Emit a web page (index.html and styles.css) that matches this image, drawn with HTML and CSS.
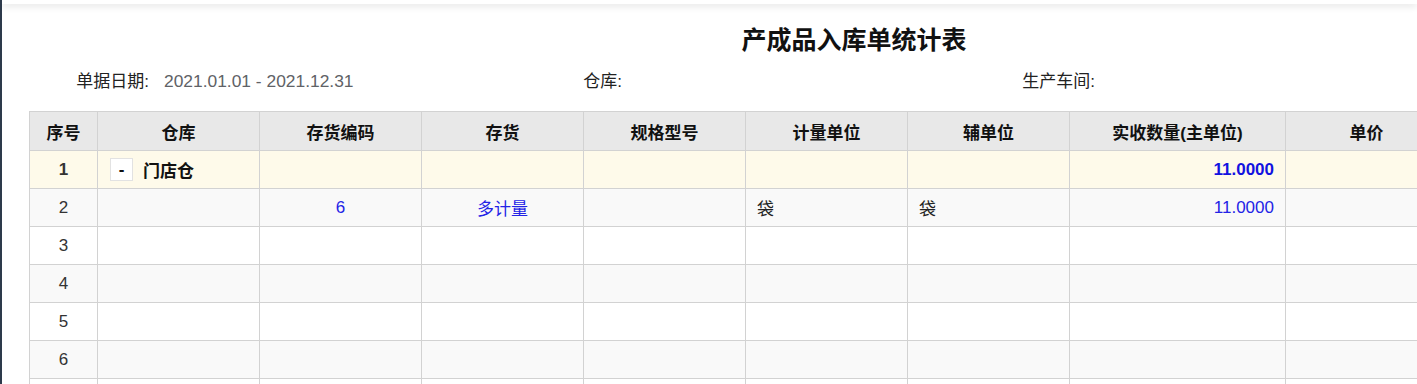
FILE: index.html
```html
<!DOCTYPE html>
<html lang="zh-CN">
<head>
<meta charset="utf-8">
<title>产成品入库单统计表</title>
<link rel="stylesheet" href="styles.css">
</head>
<body>
<div class="app">
  <aside class="side"></aside>
  <main class="main">
    <div class="topbar"></div>
    <div class="content">
      <h1 class="title">产成品入库单统计表</h1>
      <div class="info">
        <div class="field"><span class="label">单据日期:</span><span class="value">2021.01.01 - 2021.12.31</span></div>
        <div class="field"><span class="label">仓库:</span><span class="value"></span></div>
        <div class="field"><span class="label">生产车间:</span><span class="value"></span></div>
      </div>
      <table class="grid">
        <colgroup>
          <col class="c-seq"><col class="c-std"><col class="c-std"><col class="c-std"><col class="c-std"><col class="c-std"><col class="c-std"><col class="c-qty"><col class="c-std">
        </colgroup>
        <thead>
          <tr><th>序号</th><th>仓库</th><th>存货编码</th><th>存货</th><th>规格型号</th><th>计量单位</th><th>辅单位</th><th>实收数量(主单位)</th><th>单价</th></tr>
        </thead>
        <tbody>
          <tr class="group">
            <td class="center">1</td>
            <td><span class="toggle">-</span><span class="gname">门店仓</span></td>
            <td></td><td></td><td></td><td></td><td></td>
            <td class="num link">11.0000</td><td></td>
          </tr>
          <tr class="odd">
            <td class="center">2</td><td></td>
            <td class="center link">6</td><td class="center link">多计量</td>
            <td></td><td>袋</td><td>袋</td>
            <td class="num link">11.0000</td><td></td>
          </tr>
          <tr><td class="center">3</td><td></td><td></td><td></td><td></td><td></td><td></td><td></td><td></td></tr>
          <tr class="odd"><td class="center">4</td><td></td><td></td><td></td><td></td><td></td><td></td><td></td><td></td></tr>
          <tr><td class="center">5</td><td></td><td></td><td></td><td></td><td></td><td></td><td></td><td></td></tr>
          <tr class="odd"><td class="center">6</td><td></td><td></td><td></td><td></td><td></td><td></td><td></td><td></td></tr>
          <tr><td></td><td></td><td></td><td></td><td></td><td></td><td></td><td></td><td></td></tr>
        </tbody>
      </table>
    </div>
  </main>
</div>
</body>
</html>
```
FILE: styles.css
```css
* { box-sizing: border-box; }
html, body {
  margin: 0;
  padding: 0;
  height: 100%;
  overflow: hidden;
  background: #fff;
  font-family: "Liberation Sans", "Noto Sans CJK SC", sans-serif;
  color: #222;
}
.app {
  display: flex;
  height: 100%;
}
.side {
  width: 2px;
  flex: none;
  background: #2d3a4b;
}
.main {
  flex: 1;
  min-width: 0;
  overflow: hidden;
}
.topbar {
  height: 4px;
  background: #fff;
  box-shadow: 0 2px 7px rgba(0, 0, 0, 0.14);
  position: relative;
  z-index: 1;
}
.content {
  padding-left: 27px;
  width: 1680px;
}
.title {
  margin: 0;
  padding-top: 20px;
  width: 1650px;
  text-align: center;
  font-size: 25px;
  line-height: 32px;
  font-weight: bold;
  color: #111;
}
.info {
  display: grid;
  grid-template-columns: repeat(3, 473px);
  height: 46px;
  align-items: center;
  font-size: 17px;
}
.field {
  display: flex;
  align-items: baseline;
}
.label {
  width: 120px;
  text-align: right;
  color: #222;
}
.value {
  margin-left: 15px;
  color: #606266;
  font-size: 17.4px;
}
.grid {
  border-collapse: collapse;
  table-layout: fixed;
  width: 1418px;
  font-size: 17px;
  margin-top: 9px;
}
.c-seq { width: 68px; }
.c-std { width: 162px; }
.c-qty { width: 216px; }
.grid th, .grid td {
  border: 1px solid #d2d2d2;
  height: 38px;
  padding: 0 11px;
  white-space: nowrap;
  overflow: hidden;
}
.grid th {
  background: #e8e8e8;
  font-weight: bold;
  color: #111;
  height: 39px;
  text-align: center;
}
.grid tbody tr { background: #fff; }
.grid tbody tr.odd { background: #f9f9f9; }
.grid tbody tr.group { background: #fefaea; font-weight: bold; color: #111; }
.center { text-align: center; color: #333; }
.num { text-align: right; }
.link { color: #2323e6 !important; }
.group .link { color: #1212e0 !important; }
.toggle {
  display: inline-block;
  width: 23px;
  height: 23px;
  line-height: 21px;
  text-align: center;
  background: #fff;
  border: 1px solid #e2e2e2;
  vertical-align: middle;
  font-weight: bold;
  margin-right: 10px;
  margin-left: 1px;
}
.gname { vertical-align: middle; }
```
